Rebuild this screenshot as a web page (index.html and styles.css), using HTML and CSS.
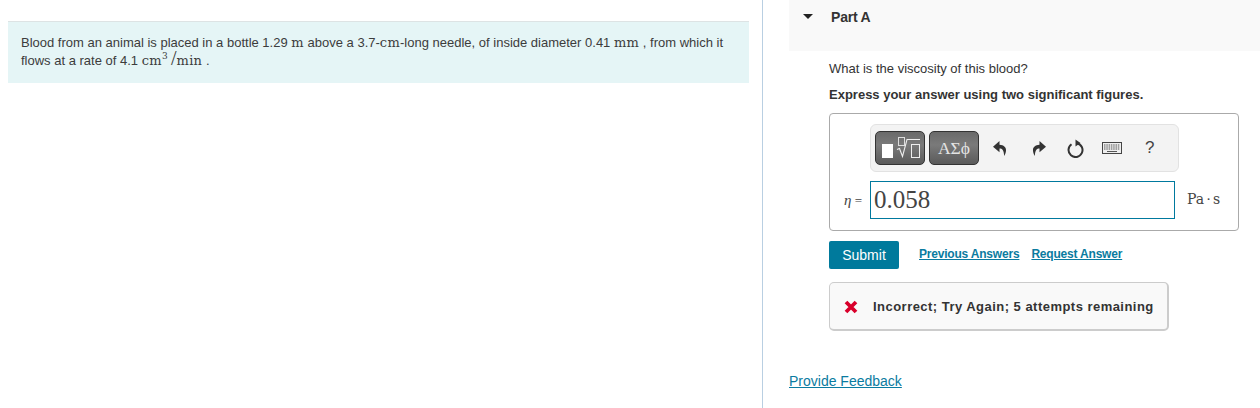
FILE: index.html
```html
<!DOCTYPE html>
<html lang="en">
<head>
<meta charset="utf-8">
<title>Part A</title>
<link rel="stylesheet" href="styles.css">
</head>
<body>
<div class="page">
  <section class="left">
    <div class="intro">
      <p>Blood from an animal is placed in a bottle 1.29 <span class="m">m</span> above a 3.7-<span class="m">cm</span>-long needle, of inside diameter 0.41 <span class="m">mm</span> , from which it flows at a rate of 4.1 <span class="m">cm<sup>3</sup></span><span class="slash">/</span><span class="m">min</span> .</p>
    </div>
  </section>
  <section class="right">
    <header class="part-head">
      <span class="caret"></span>
      <h2>Part A</h2>
    </header>
    <div class="part-body">
      <p class="q">What is the viscosity of this blood?</p>
      <p class="inst">Express your answer using two significant figures.</p>
      <div class="answer">
        <div class="toolbar">
          <button class="tb t1" aria-label="templates">
            <svg width="48" height="32" viewBox="1 1 48 32">
              <rect x="7" y="13" width="11" height="14" fill="#fff"/>
              <rect x="23.5" y="6.500" width="6" height="8" fill="none" stroke="#ddd"/>
              <path d="M22 18.500l2.500-1 3 8 4.500-17h13" fill="none" stroke="#eee" stroke-width="1.100"/>
              <rect x="36.500" y="13.500" width="8" height="13" fill="none" stroke="#eee"/>
            </svg>
          </button>
          <button class="tb t2">ΑΣϕ</button>
          <svg class="ico undo" width="14" height="15" viewBox="0 0 14 15"><path d="M6.500 0L0 5.700l6.500 5.500V7.600c2.800 0 4.300 1.600 4.700 7.400 3.600-6.300 1.800-11-4.700-11.300z" fill="#333"/></svg>
          <svg class="ico redo" width="14" height="15" viewBox="0 0 14 15"><path d="M7.500 0L14 5.700l-6.500 5.500V7.600c-2.800 0-4.300 1.600-4.700 7.400C-.8 8.700 1 4 7.500 3.700z" fill="#333"/></svg>
          <svg class="ico reset" width="17" height="19" viewBox="0 0 17 19"><path d="M4.500 5.300A7 7 0 1 0 10 4.200" fill="none" stroke="#333" stroke-width="2"/><path d="M8.500 .5l5 3.500-5 3.500z" fill="#333"/></svg>
          <svg class="ico kbd" width="20" height="12" viewBox="0 0 20 12"><rect x=".5" y=".5" width="19" height="11" fill="#eee" stroke="#444"/><path d="M2 3h16M2 5h16M2 7h16" stroke="#555" stroke-dasharray="1.500 .8"/><path d="M5 9.500h10" stroke="#555"/></svg>
          <span class="help">?</span>
        </div>
        <div class="input-row">
          <span class="lbl"><i>η</i> =</span>
          <div class="field">0.058</div>
          <span class="unit">Pa<span class="dot">⋅</span>s</span>
        </div>
      </div>
      <div class="actions">
        <button class="submit">Submit</button>
        <a href="#">Previous Answers</a>
        <a href="#">Request Answer</a>
      </div>
      <div class="feedback">
        <svg width="14" height="14" viewBox="0 0 14 14"><path d="M2 2l10 10M12 2L2 12" stroke="#d9002b" stroke-width="3.800"/></svg>
        <span>Incorrect; Try Again; 5 attempts remaining</span>
      </div>
    </div>
    <a class="provide" href="#">Provide Feedback</a>
  </section>
</div>
</body>
</html>
```
FILE: styles.css
```css
* { box-sizing: border-box; }
html, body { margin: 0; padding: 0; background: #fff; }
body { font-family: "Liberation Sans", Arial, sans-serif; color: #333; width: 1260px; height: 408px; overflow: hidden; }
.page { display: flex; height: 408px; }
.left { width: 763px; padding: 21px 13px 0 8px; border-right: 1px solid #b9cfe2; }
.intro { height: 62px; background: #e5f5f6; border-top: 1px solid #dde3e4; padding: 12px 13px 0 13px; }
.intro p { margin: 0; font-size: 13px; line-height: 18px; color: #3c3c3c; }
.m { font-family: "DejaVu Serif", serif; font-size: 13px; letter-spacing: .3px; }
.slash { font-family: "Liberation Serif", serif; font-size: 20px; line-height: 0; margin-left: 3px; }
sup { font-size: 9px; line-height: 0; vertical-align: 6px; }
.right { flex: 1; padding-left: 26px; display: flex; flex-direction: column; }
.part-head { height: 51px; background: #f9f9f9; display: flex; align-items: flex-start; padding: 10px 0 0 14px; }
.caret { width: 0; height: 0; border-left: 5px solid transparent; border-right: 5px solid transparent; border-top: 5px solid #222; margin-top: 4px; }
h2 { margin: 0 0 0 18px; font-size: 14px; line-height: 15px; font-weight: bold; color: #333; letter-spacing: -.2px; }
.part-body { padding: 0 21px 0 40px; }
.q { margin: 10px 0 0; font-size: 13px; line-height: 16px; color: #333; }
.inst { margin: 10px 0 0; font-size: 13px; line-height: 16px; font-weight: bold; color: #333; }
.answer { margin-top: 10px; height: 118px; border: 1px solid #aaa; border-radius: 4px; padding: 10px 0 0; }
.toolbar { margin-left: 40px; width: 309px; height: 48px; background: #f3f3f3; border: 1px solid #e2e2e2; border-radius: 6px; display: flex; align-items: center; padding-left: 4px; }
.tb { height: 34px; border: 1px solid #333; border-radius: 5px; background: linear-gradient(#6a6a6a, #7a7a7a 40%, #5a5a5a); color: #e4e4e4; padding: 0; }
.t1 { width: 50px; margin-right: 4px; }
.t1 svg { display: block; }
.t2 { width: 50px; font-family: "Liberation Serif", serif; font-size: 17.500px; }
.ico { display: block; flex: none; }
.undo { margin-left: 14px; }
.redo { margin-left: 25px; }
.reset { margin-left: 21px; }
.kbd { margin-left: 18px; }
.help { margin-left: 23px; font-size: 17px; color: #444; }
.input-row { display: flex; align-items: center; margin-top: 9px; }
.lbl { width: 40px; text-align: right; padding-right: 8px; font-family: "Liberation Serif", serif; font-size: 13px; color: #444; }
.lbl i { font-size: 15px; }
.field { width: 305px; height: 38px; border: 1px solid #00799e; font-family: "Liberation Serif", serif; font-size: 25px; line-height: 36px; padding-left: 3px; color: #444; }
.unit { margin-left: 12px; font-family: "DejaVu Serif", serif; font-size: 14px; color: #444; margin-top: -2px; }
.dot { margin: 0 2px; }
.actions { display: flex; align-items: flex-start; margin-top: 10px; height: 28px; font-size: 12px; }
.submit { width: 70px; height: 28px; background: #007a9c; color: #fff; border: 0; border-radius: 2px; font: 14px "Liberation Sans", Arial, sans-serif; padding: 0; margin-right: 20px; }
.actions a { color: #0a7ba0; font-weight: bold; line-height: 26px; margin-right: 12px; letter-spacing: -.2px; }
.feedback { margin-top: 13px; width: 340px; height: 49px; padding-top: 1px; background: #f9f9f9; border: 1px solid #ccc; border-bottom-width: 2px; border-right-width: 2px; border-radius: 5px; display: flex; align-items: center; padding-left: 14px; font-size: 13px; font-weight: bold; color: #333; letter-spacing: .47px; }
.feedback svg { flex: none; margin-right: 15px; }
.provide { margin: 42px 0 0 0; color: #0a7ba0; font-size: 14px; line-height: 16px; }
```
